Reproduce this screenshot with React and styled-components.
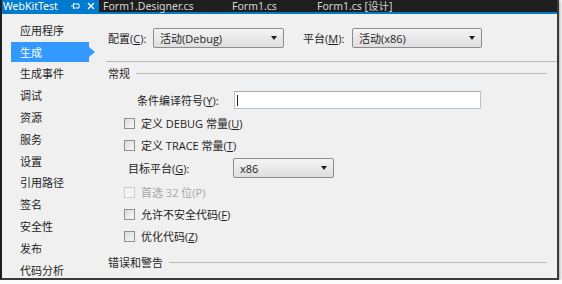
import React from 'react';
import styled, { createGlobalStyle, css } from 'styled-components';

const Global = createGlobalStyle`
  html, body { margin: 0; padding: 0; background: #fbfbfb; }
  body {
    font-family: "Open Sans", "Noto Sans CJK SC", sans-serif;
    font-size: 11px;
    color: #1e1e1e;
  }
`

const Window = styled.div`
  // 窗口外框
  width: 555px;
  height: 278px;
  background: #f0f0f0;
  border-left: 2px solid #1e1e1e;
  border-right: 2px solid #3a3a3a;
  border-bottom: 2px solid #3a3a3a;
  box-shadow: 1px 1px 3px rgba(0, 0, 0, 0.35);
  display: flex;
  flex-direction: column;
  overflow: hidden;
`

const TabBar = styled.div`
  display: flex;
  align-items: stretch;
  height: 12px;
  background: #1e1e1e;
  border-bottom: 2px solid #007acc;
  font-family: "Noto Sans", "Noto Sans CJK SC", sans-serif;
  font-size: 10.5px;
  line-height: 12px;
  color: #d6d6d6;
  white-space: nowrap;
`

const Tab = styled.div`
  flex: none;
  display: flex;
  align-items: center;
  padding-left: ${p => p.$pad || 0}px;
  width: ${p => (p.$w ? `${p.$w}px` : 'auto')};
  box-sizing: border-box;
  ${p =>
    p.$active &&
    css`
      background: #007acc;
      color: #ffffff;
    `}
`

const TabIcons = styled.span`
  display: flex;
  align-items: center;
  gap: 7px;
  margin-left: auto;
  padding-right: 4px;
`

const Body = styled.div`
  flex: 1;
  display: flex;
`

const Sidebar = styled.div`
  width: 104px;
  padding-top: 5px;
  display: flex;
  flex-direction: column;
`

const NavItem = styled.div`
  // 左侧菜单
  position: relative;
  height: 21.8px;
  display: flex;
  align-items: center;
  padding-left: 18px;
  ${p =>
    p.$active &&
    css`
      color: #ffffff;
      &::before {
        content: '';
        position: absolute;
        left: 9px;
        top: 1px;
        width: 78px;
        height: 20px;
        background: #3399ff;
        z-index: 0;
      }
      &::after {
        content: '';
        position: absolute;
        left: 87px;
        top: 6px;
        border-left: 6px solid #3399ff;
        border-top: 5px solid transparent;
        border-bottom: 5px solid transparent;
      }
    `}
`

const NavText = styled.span`
  position: relative;
  z-index: 1;
`

const Main = styled.div`
  flex: 1;
  display: flex;
  flex-direction: column;
`

const ConfigRow = styled.div`
  display: flex;
  align-items: center;
  height: 20px;
  margin-top: 14px;
  padding-left: 2px;
`

const Label = styled.span`
  width: ${p => (p.$w ? `${p.$w}px` : 'auto')};
  flex: none;
  color: ${p => (p.$disabled ? '#a6a6a6' : '#1e1e1e')};
`

const Combo = styled.div`
  // 下拉框
  width: ${p => p.$w}px;
  height: 20px;
  box-sizing: border-box;
  border: 1px solid #8c8c8c;
  border-radius: 2px;
  background: linear-gradient(#f4f4f4, #dedede);
  display: flex;
  align-items: center;
  justify-content: space-between;
  padding: 0 6px;
  margin-right: ${p => p.$mr || 0}px;
`

const Arrow = styled.span`
  width: 0;
  height: 0;
  border-left: 3px solid transparent;
  border-right: 3px solid transparent;
  border-top: 4px solid #1e1e1e;
`

const Separator = styled.div`
  height: 1px;
  background: #b9b9b9;
  margin-top: 13px;
`

const SectionHeader = styled.div`
  display: flex;
  align-items: center;
  gap: 6px;
  height: 22px;
  padding-left: 2px;
  margin-right: 10px;
  margin-top: ${p => p.$mt || 0}px;
  &::after {
    content: '';
    flex: 1;
    height: 1px;
    background: #b9b9b9;
  }
`

const Row = styled.div`
  display: flex;
  align-items: center;
  height: 22px;
  margin-top: ${p => p.$mt || 0}px;
  padding-left: ${p => p.$indent}px;
  gap: ${p => p.$gap || 0}px;
`

const TextInput = styled.div`
  width: 247px;
  height: 18px;
  box-sizing: border-box;
  background: #ffffff;
  border: 1px solid #b5c3cf;
  border-top-color: #a3afba;
  display: flex;
  align-items: center;
  padding-left: 2px;
`

const Caret = styled.span`
  width: 1px;
  height: 11px;
  background: #1e1e1e;
`

const CheckBox = styled.span`
  width: 11px;
  height: 11px;
  box-sizing: border-box;
  border: 1px solid ${p => (p.$disabled ? '#cfcfcf' : '#8f8f8f')};
  background: ${p => (p.$disabled ? '#f4f4f4' : 'linear-gradient(135deg, #dcdcdc, #f8f8f8)')};
`

const u = ch => <u>{ch}</u>

function Pin() {
  return (
    <svg width="9" height="8" viewBox="0 0 9 8">
      <path d="M0 4h2M2.5 1v6M3 2h5v4H3" fill="none" stroke="#fff" strokeWidth="1" />
    </svg>
  )
}

function Close() {
  return (
    <svg width="8" height="8" viewBox="0 0 8 8">
      <path d="M1 1l6 6M7 1L1 7" stroke="#fff" strokeWidth="1.4" />
    </svg>
  )
}

const navItems = ['应用程序', '生成', '生成事件', '调试', '资源', '服务', '设置', '引用路径', '签名', '安全性', '发布', '代码分析']

export default function App() {
  return (
    <>
      <Global />
      <Window>
        <TabBar>
          <Tab $active $w={97} $pad={1}>
            WebKitTest
            <TabIcons><Pin /><Close /></TabIcons>
          </Tab>
          <Tab $w={131} $pad={4}>Form1.Designer.cs</Tab>
          <Tab $w={85} $pad={2}>Form1.cs</Tab>
          <Tab $pad={2}>Form1.cs [设计]</Tab>
        </TabBar>
        <Body>
          <Sidebar>
            {navItems.map(item => (
              <NavItem key={item} $active={item === '生成'}>
                <NavText>{item}</NavText>
              </NavItem>
            ))}
          </Sidebar>
          <Main>
            <ConfigRow>
              <Label $w={45}>配置({u('C')}):</Label>
              <Combo $w={131} $mr={19}>活动(Debug)<Arrow /></Combo>
              <Label $w={49}>平台({u('M')}):</Label>
              <Combo $w={130}>活动(x86)<Arrow /></Combo>
            </ConfigRow>
            <Separator />
            <SectionHeader>常规</SectionHeader>
            <Row $indent={31} $mt={5}>
              <Label $w={97}>条件编译符号({u('Y')}):</Label>
              <TextInput><Caret /></TextInput>
            </Row>
            <Row $indent={18} $gap={6} $mt={1}>
              <CheckBox />
              <Label>定义 DEBUG 常量({u('U')})</Label>
            </Row>
            <Row $indent={18} $gap={6}>
              <CheckBox />
              <Label>定义 TRACE 常量({u('T')})</Label>
            </Row>
            <Row $indent={22} $mt={1}>
              <Label $w={105}>目标平台({u('G')}):</Label>
              <Combo $w={101}>x86<Arrow /></Combo>
            </Row>
            <Row $indent={18} $gap={6} $mt={2}>
              <CheckBox $disabled />
              <Label $disabled>首选 32 位(P)</Label>
            </Row>
            <Row $indent={18} $gap={6}>
              <CheckBox />
              <Label>允许不安全代码({u('F')})</Label>
            </Row>
            <Row $indent={18} $gap={6}>
              <CheckBox />
              <Label>优化代码({u('Z')})</Label>
            </Row>
            <SectionHeader $mt={4}>错误和警告</SectionHeader>
          </Main>
        </Body>
      </Window>
    </>
  )
}
